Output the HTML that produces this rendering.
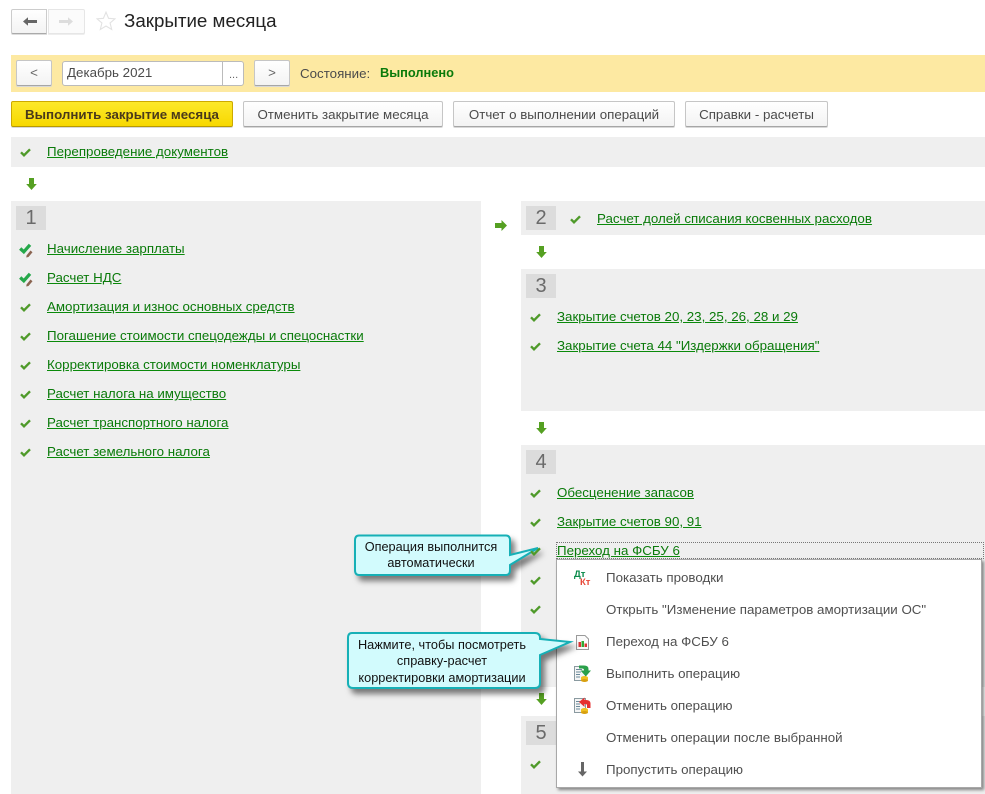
<!DOCTYPE html>
<html lang="ru"><head><meta charset="utf-8"><title>Закрытие месяца</title>
<style>
html,body{margin:0;padding:0;background:#fff}
#p{position:relative;width:985px;height:794px;overflow:hidden;font-family:"Liberation Sans",sans-serif;font-size:13.33px;color:#4b4b4b;background:#fff}
#p div,#p span,#p svg{position:absolute}
.g{background:#efefef}
.n{background:#dcdcdc;width:30px;height:24px;text-align:center;font-size:20px;line-height:24px;color:#6a6a6a}
.l{color:#0a7a0a;text-decoration:underline;text-decoration-color:#0a8a0a;white-space:nowrap;line-height:16px}
.b{box-sizing:border-box;height:26px;background:linear-gradient(#fff,#f3f3f3);border:1px solid #c6c6c6;border-bottom-color:#a6a6a6;box-shadow:0 1px 0 #d8d8d8;border-radius:2px;text-align:center;line-height:25px;color:#4b4b4b;white-space:nowrap}
.m{left:606px;line-height:16px;white-space:nowrap;color:#4f4f4f}
</style></head><body><div id="p">
<svg width="0" height="0" style="display:none"><defs>
<symbol id="c" viewBox="0 0 11 9"><path d="M1 4.300 L4 7.300 L10 1.300" fill="none" stroke="#4f9a2a" stroke-width="2.400"/></symbol>
<symbol id="d" viewBox="0 0 11 12"><path d="M3 0H8V6H10.800L5.500 12L.2 6H3Z" fill="#55a022"/></symbol>
<symbol id="r" viewBox="0 0 12 11"><path d="M0 3H6.500V0L12 5.500L6.500 11V8H0Z" fill="#55a022"/></symbol>
<symbol id="e" viewBox="0 0 15 15"><path d="M7.500 12.500 L11.500 7.500 L13.500 9.300 L9.500 14 L7.300 14.500 Z" fill="#8a6450"/><path d="M1.200 5.500 L4.800 8.800 L11 1.800" fill="none" stroke="#25a84a" stroke-width="3.300"/></symbol>
</defs></svg>

<div style="left:11px;top:9px;width:36px;height:25px;box-sizing:border-box;background:linear-gradient(#fff,#f3f3f3);border:1px solid #ccc;border-bottom-color:#aaa;box-shadow:0 1px 0 #ddd;border-radius:2px 0 0 2px"></div>
<div style="left:48px;top:9px;width:37px;height:25px;box-sizing:border-box;background:#fbfbfb;border:1px solid #e6e6e6;box-shadow:0 1px 0 #eee;border-radius:0 2px 2px 0"></div>
<svg style="left:23px;top:17px" width="14" height="9" viewBox="0 0 14 9"><path d="M0 4.500L5 .2V3H14V6H5V8.800Z" fill="#666"/></svg>
<svg style="left:59px;top:17px" width="14" height="9" viewBox="0 0 14 9"><path d="M14 4.500L9 .2V3H0V6H9V8.800Z" fill="#ddd"/></svg>
<svg style="left:96px;top:11px" width="20" height="20" viewBox="0 0 20 20"><path d="M10 1.200L12.600 7.300 19 7.800 14.100 12 15.700 18.500 10 15 4.300 18.500 5.900 12 1 7.800 7.400 7.300Z" fill="#fff" stroke="#e2e2e2" stroke-width="1.100"/></svg>
<div style="left:124px;top:10px;font-size:18.750px;line-height:22px;color:#222;white-space:nowrap">Закрытие месяца</div>

<div style="left:11px;top:55px;width:974px;height:37px;background:#fde9a2"></div>
<div class="b" style="left:16px;top:60px;width:36px;height:26px;line-height:24px;color:#666">&lt;</div>
<div style="left:62px;top:61px;width:182px;height:25px;box-sizing:border-box;background:#fff;border:1px solid #bbb;border-radius:3px"></div>
<div style="left:222px;top:61px;width:1px;height:25px;background:#bbb"></div>
<div style="left:67px;top:65px;line-height:16px;white-space:nowrap">Декабрь 2021</div>
<div style="left:229px;top:67px;line-height:16px;font-size:11px;color:#666">...</div>
<div class="b" style="left:254px;top:60px;width:36px;height:26px;line-height:24px;color:#666">&gt;</div>
<div style="left:300px;top:66px;line-height:16px;white-space:nowrap">Состояние:</div>
<div style="left:380px;top:65px;line-height:16px;white-space:nowrap;font-weight:bold;font-size:12.800px;color:#0a7a0a">Выполнено</div>

<div class="b" style="left:11px;top:101px;width:222px;background:linear-gradient(#fde82a,#f7d800);border-color:#cda900;border-bottom-color:#b89a00;font-weight:bold;color:#4a3a1a">Выполнить закрытие месяца</div>
<div class="b" style="left:243px;top:101px;width:200px">Отменить закрытие месяца</div>
<div class="b" style="left:453px;top:101px;width:222px">Отчет о выполнении операций</div>
<div class="b" style="left:685px;top:101px;width:143px">Справки - расчеты</div>

<div class="g" style="left:11px;top:137px;width:974px;height:30px"></div>
<svg style="left:20px;top:148px" width="11" height="9"><use href="#c"/></svg>
<div class="l" style="left:47px;top:144px">Перепроведение документов</div>
<svg style="left:26px;top:178px" width="11" height="12"><use href="#d"/></svg>

<div class="g" style="left:11px;top:201px;width:470px;height:593px"></div>
<div class="n" style="left:16px;top:206px">1</div>
<svg style="left:19px;top:243px" width="15" height="15"><use href="#e"/></svg>
<div class="l" style="left:47px;top:241px">Начисление зарплаты</div>
<svg style="left:19px;top:272px" width="15" height="15"><use href="#e"/></svg>
<div class="l" style="left:47px;top:270px">Расчет НДС</div>
<svg style="left:20px;top:303px" width="11" height="9"><use href="#c"/></svg>
<div class="l" style="left:47px;top:299px">Амортизация и износ основных средств</div>
<svg style="left:20px;top:332px" width="11" height="9"><use href="#c"/></svg>
<div class="l" style="left:47px;top:328px">Погашение стоимости спецодежды и спецоснастки</div>
<svg style="left:20px;top:361px" width="11" height="9"><use href="#c"/></svg>
<div class="l" style="left:47px;top:357px">Корректировка стоимости номенклатуры</div>
<svg style="left:20px;top:390px" width="11" height="9"><use href="#c"/></svg>
<div class="l" style="left:47px;top:386px">Расчет налога на имущество</div>
<svg style="left:20px;top:419px" width="11" height="9"><use href="#c"/></svg>
<div class="l" style="left:47px;top:415px">Расчет транспортного налога</div>
<svg style="left:20px;top:448px" width="11" height="9"><use href="#c"/></svg>
<div class="l" style="left:47px;top:444px">Расчет земельного налога</div>

<svg style="left:495px;top:220px" width="12" height="11"><use href="#r"/></svg>
<div class="g" style="left:521px;top:201px;width:464px;height:34px"></div>
<div class="n" style="left:526px;top:206px">2</div>
<svg style="left:570px;top:215px" width="11" height="9"><use href="#c"/></svg>
<div class="l" style="left:597px;top:211px">Расчет долей списания косвенных расходов</div>
<svg style="left:536px;top:246px" width="11" height="12"><use href="#d"/></svg>

<div class="g" style="left:521px;top:269px;width:464px;height:142px"></div>
<div class="n" style="left:526px;top:274px">3</div>
<svg style="left:530px;top:313px" width="11" height="9"><use href="#c"/></svg>
<div class="l" style="left:557px;top:309px">Закрытие счетов 20, 23, 25, 26, 28 и 29</div>
<svg style="left:530px;top:342px" width="11" height="9"><use href="#c"/></svg>
<div class="l" style="left:557px;top:338px">Закрытие счета 44 "Издержки обращения"</div>
<svg style="left:536px;top:422px" width="11" height="12"><use href="#d"/></svg>

<div class="g" style="left:521px;top:445px;width:464px;height:242px"></div>
<div class="n" style="left:526px;top:450px">4</div>
<svg style="left:530px;top:489px" width="11" height="9"><use href="#c"/></svg>
<div class="l" style="left:557px;top:485px">Обесценение запасов</div>
<svg style="left:530px;top:518px" width="11" height="9"><use href="#c"/></svg>
<div class="l" style="left:557px;top:514px">Закрытие счетов 90, 91</div>
<div style="left:556px;top:542px;width:428px;height:17px;box-sizing:border-box;border:1px dotted #777"></div>
<div class="l" style="left:557px;top:543px">Переход на ФСБУ 6</div>
<svg style="left:530px;top:576px" width="11" height="9"><use href="#c"/></svg>
<svg style="left:530px;top:605px" width="11" height="9"><use href="#c"/></svg>
<svg style="left:536px;top:693px" width="11" height="12"><use href="#d"/></svg>

<div class="g" style="left:521px;top:716px;width:464px;height:78px"></div>
<div class="n" style="left:526px;top:721px">5</div>
<svg style="left:530px;top:760px" width="11" height="9"><use href="#c"/></svg>

<div style="left:556px;top:559px;width:426px;height:229px;box-sizing:border-box;background:#fff;border:1px solid #a8a8a8;box-shadow:2px 2px 3px rgba(0,0,0,.45)"></div>
<div style="left:574px;top:570px;font-size:9.500px;line-height:9px;font-weight:bold;color:#0a8a4a">Дт</div>
<div style="left:580px;top:578px;font-size:9.500px;line-height:9px;font-weight:bold;color:#e84a3a">Кт</div>
<div class="m" style="top:570px">Показать проводки</div>
<div class="m" style="top:602px">Открыть "Изменение параметров амортизации ОС"</div>
<svg style="left:576px;top:635px" width="13" height="15" viewBox="0 0 13 15"><path d="M.5.5H9L12.500 4V14.500H.5Z" fill="#fbfbfb" stroke="#9a9a9a"/><rect x="2.500" y="7" width="2.500" height="5" fill="#d33"/><rect x="5.500" y="6" width="2.500" height="6" fill="#3a3"/><rect x="8.500" y="8.500" width="2.500" height="3.500" fill="#d33"/></svg>
<div class="m" style="top:634px">Переход на ФСБУ 6</div>
<svg style="left:573px;top:665px" width="18" height="18" viewBox="0 0 18 18"><rect x="1.500" y="1.500" width="11" height="14" fill="#f5f5f5" stroke="#8a9aa0"/><path d="M3 4.500H9M3 7H8M3 9.500H7M3 12H7" stroke="#6a8a9a"/><path d="M6 .5H11Q15.500 .5 15.500 4V5.500H18L12.800 11.500 7.500 5.500H11V5Q11 3.500 9 3.500H6Z" fill="#2aa04a"/><ellipse cx="11.500" cy="12.500" rx="3.500" ry="1.500" fill="#f0c020"/><rect x="8" y="12.500" width="7" height="3" fill="#f0c020"/><ellipse cx="11.500" cy="15.500" rx="3.500" ry="1.500" fill="#d8a010"/></svg>
<div class="m" style="top:666px">Выполнить операцию</div>
<svg style="left:573px;top:697px" width="18" height="18" viewBox="0 0 18 18"><rect x="1.500" y="1.500" width="11" height="14" fill="#f5f5f5" stroke="#8a9aa0"/><path d="M3 4.500H7M3 7H7M3 9.500H7M3 12H7" stroke="#6a8a9a"/><path d="M17.500 11V6.500Q17.500 3 13 3H11.500V.5L6 5 11.500 10V7H12.500Q14 7 14 8.500V11Z" fill="#e63030"/><ellipse cx="11.500" cy="12.500" rx="3.500" ry="1.500" fill="#f0c020"/><rect x="8" y="12.500" width="7" height="3" fill="#f0c020"/><ellipse cx="11.500" cy="15.500" rx="3.500" ry="1.500" fill="#d8a010"/></svg>
<div class="m" style="top:698px">Отменить операцию</div>
<div class="m" style="top:730px">Отменить операции после выбранной</div>
<svg style="left:577px;top:762px" width="11" height="15" viewBox="0 0 11 15"><path d="M4 0H7V9.500H10L5.500 14.500 1 9.500H4Z" fill="#666"/></svg>
<div class="m" style="top:762px">Пропустить операцию</div>

<svg style="left:345px;top:530px;filter:drop-shadow(4px 5px 3px rgba(0,0,0,.5))" width="200" height="52" viewBox="0 0 200 52"><path d="M14 5.500H161Q165 5.500 165 10.500V25L193 18 165 35V40Q165 45 161 45H14Q10 45 10 40V10.500Q10 5.500 14 5.500Z" fill="#d2fbfd" stroke="#16b0b6" stroke-width="2"/></svg>
<div style="left:355px;top:539px;width:152px;text-align:center;font-size:12.700px;line-height:16px;color:#111;white-space:nowrap">Операция выполнится<br>автоматически</div>
<svg style="left:530px;top:547px" width="11" height="9"><use href="#c"/></svg>

<svg style="left:345px;top:628px;filter:drop-shadow(4px 5px 3px rgba(0,0,0,.5))" width="232" height="66" viewBox="0 0 232 66"><path d="M7 5H190Q195 5 195 10V11L225 14 195 27V55Q195 60 190 60H8Q3 60 3 55V10Q3 5 7 5Z" fill="#d2fbfd" stroke="#16b0b6" stroke-width="2"/></svg>
<div style="left:347px;top:636.500px;width:190px;text-align:center;font-size:12.750px;line-height:16.500px;color:#111;white-space:nowrap">Нажмите, чтобы посмотреть<br>справку-расчет<br>корректировки амортизации</div>
</div></body></html>
